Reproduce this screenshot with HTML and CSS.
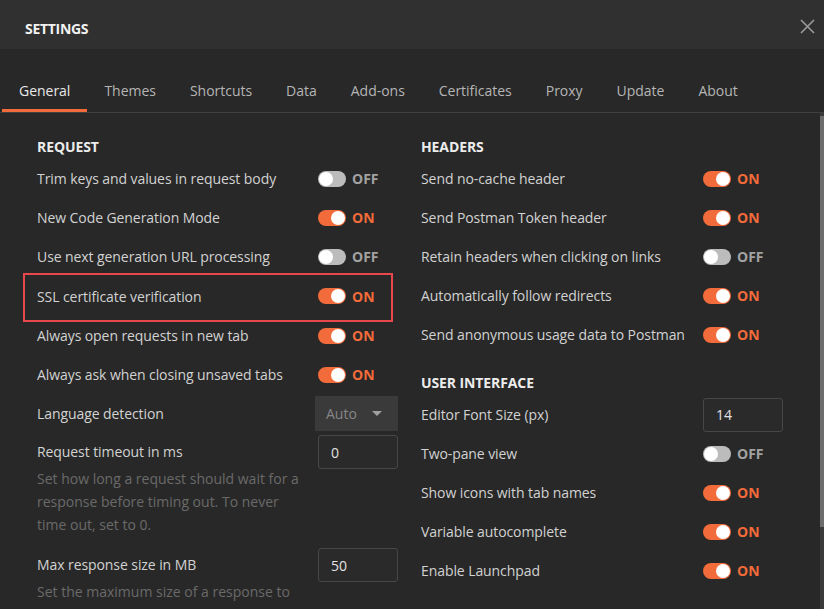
FILE: index.html
```html
<!DOCTYPE html>
<html>
<head>
<meta charset="utf-8">
<link rel="stylesheet" href="styles.css">
</head>
<body>
<div class="app">
  <header class="hdr">
    <span class="title">SETTINGS</span>
    <span class="close"><svg width="15" height="15" viewBox="0 0 15 15"><path d="M1 1L14 14M14 1L1 14" stroke="#9a9a9a" stroke-width="1.6" fill="none"/></svg></span>
  </header>
  <nav class="tabs">
    <span class="tab active">General</span>
    <span class="tab">Themes</span>
    <span class="tab">Shortcuts</span>
    <span class="tab">Data</span>
    <span class="tab">Add-ons</span>
    <span class="tab">Certificates</span>
    <span class="tab">Proxy</span>
    <span class="tab">Update</span>
    <span class="tab">About</span>
  </nav>
  <div class="main">
    <div class="cols">
      <section class="col">
        <h3 class="sec">REQUEST</h3>
        <div class="row"><span class="lbl">Trim keys and values in request body</span><span class="ctl"><span class="tg off"><span class="knob"></span></span><span class="st off">OFF</span></span></div>
        <div class="row"><span class="lbl">New Code Generation Mode</span><span class="ctl"><span class="tg on"><span class="knob"></span></span><span class="st on">ON</span></span></div>
        <div class="row"><span class="lbl">Use next generation URL processing</span><span class="ctl"><span class="tg off"><span class="knob"></span></span><span class="st off">OFF</span></span></div>
        <div class="row hl"><span class="lbl">SSL certificate verification</span><span class="ctl"><span class="tg on"><span class="knob"></span></span><span class="st on">ON</span></span></div>
        <div class="row"><span class="lbl">Always open requests in new tab</span><span class="ctl"><span class="tg on"><span class="knob"></span></span><span class="st on">ON</span></span></div>
        <div class="row"><span class="lbl">Always ask when closing unsaved tabs</span><span class="ctl"><span class="tg on"><span class="knob"></span></span><span class="st on">ON</span></span></div>
        <div class="row"><span class="lbl">Language detection</span><span class="ctl"><span class="sel"><span>Auto</span><span class="caret"></span></span></span></div>
        <div class="field">
          <div class="ftxt">
            <div class="flbl">Request timeout in ms</div>
            <div class="desc">Set how long a request should wait for a response before timing out. To never time out, set to 0.</div>
          </div>
          <span class="inp">0</span>
        </div>
        <div class="field">
          <div class="ftxt">
            <div class="flbl">Max response size in MB</div>
            <div class="desc">Set the maximum size of a response to download. To download a response of any size, set to 0.</div>
          </div>
          <span class="inp">50</span>
        </div>
      </section>
      <section class="col">
        <h3 class="sec">HEADERS</h3>
        <div class="row"><span class="lbl">Send no-cache header</span><span class="ctl"><span class="tg on"><span class="knob"></span></span><span class="st on">ON</span></span></div>
        <div class="row"><span class="lbl">Send Postman Token header</span><span class="ctl"><span class="tg on"><span class="knob"></span></span><span class="st on">ON</span></span></div>
        <div class="row"><span class="lbl">Retain headers when clicking on links</span><span class="ctl"><span class="tg off"><span class="knob"></span></span><span class="st off">OFF</span></span></div>
        <div class="row"><span class="lbl">Automatically follow redirects</span><span class="ctl"><span class="tg on"><span class="knob"></span></span><span class="st on">ON</span></span></div>
        <div class="row"><span class="lbl">Send anonymous usage data to Postman</span><span class="ctl"><span class="tg on"><span class="knob"></span></span><span class="st on">ON</span></span></div>
        <h3 class="sec sec2">USER INTERFACE</h3>
        <div class="row"><span class="lbl">Editor Font Size (px)</span><span class="ctl"><span class="inp">14</span></span></div>
        <div class="row"><span class="lbl">Two-pane view</span><span class="ctl"><span class="tg off"><span class="knob"></span></span><span class="st off">OFF</span></span></div>
        <div class="row"><span class="lbl">Show icons with tab names</span><span class="ctl"><span class="tg on"><span class="knob"></span></span><span class="st on">ON</span></span></div>
        <div class="row"><span class="lbl">Variable autocomplete</span><span class="ctl"><span class="tg on"><span class="knob"></span></span><span class="st on">ON</span></span></div>
        <div class="row"><span class="lbl">Enable Launchpad</span><span class="ctl"><span class="tg on"><span class="knob"></span></span><span class="st on">ON</span></span></div>
      </section>
    </div>
    <div class="scroll"><div class="thumb"></div></div>
  </div>
</div>
</body>
</html>
```
FILE: styles.css
```css
html, body {
  margin: 0;
  padding: 0;
}
body {
  background: #282828;
  font-family: "Open Sans", "Liberation Sans", sans-serif;
  overflow: hidden;
}
.app {
  width: 824px;
  height: 609px;
  display: flex;
  flex-direction: column;
  overflow: hidden;
}
.hdr {
  height: 49px;
  flex: none;
  background: #303030;
  display: flex;
  align-items: center;
  justify-content: space-between;
  padding: 0 9px 0 25px;
  box-sizing: border-box;
}
.title {
  color: #f2f2f2;
  font-size: 14px;
  font-weight: 700;
  letter-spacing: -0.3px;
  margin-top: 8px;
}
.close {
  display: flex;
  width: 15px;
  height: 15px;
  margin-top: 3px;
}
.tabs {
  flex: none;
  display: flex;
  padding: 23px 0 0 2px;
  border-bottom: 1px solid #414141;
}
.tab {
  height: 40px;
  box-sizing: border-box;
  padding: 0 17px;
  border-bottom: 3px solid transparent;
  display: flex;
  align-items: center;
  font-size: 14px;
  letter-spacing: -0.02px;
  color: #b5b5b5;
}
.tab.active {
  color: #e8e8e8;
  border-bottom-color: #f26b3a;
}
.main {
  flex: 1;
  display: flex;
  overflow: hidden;
}
.cols {
  flex: 1;
  display: grid;
  grid-template-columns: 361px 362px;
  column-gap: 23px;
  align-items: start;
  padding: 22px 0 0 37px;
}
.col {
  display: flex;
  flex-direction: column;
}
.sec {
  margin: 0;
  font-size: 14px;
  font-weight: 700;
  line-height: 24px;
  letter-spacing: -0.1px;
  color: #ececec;
}
.sec2 {
  margin-top: 17px;
}
.row {
  height: 39px;
  display: flex;
  align-items: center;
}
.hl {
  position: relative;
  height: 40px;
}
.hl::after {
  content: "";
  position: absolute;
  left: -14px;
  right: 5px;
  top: -3px;
  bottom: -6px;
  border: 2px solid #e8474c;
}
.lbl {
  flex: 1;
  font-size: 14px;
  letter-spacing: -0.08px;
  color: #d2d2d2;
  white-space: nowrap;
}
.ctl {
  width: 80px;
  display: flex;
  align-items: center;
  gap: 6px;
}
.tg {
  width: 28px;
  height: 16px;
  border-radius: 8px;
  box-sizing: border-box;
  padding: 1px;
  display: flex;
}
.tg.off {
  background: #bcbcbc;
  justify-content: flex-start;
}
.tg.on {
  background: #f26b3a;
  justify-content: flex-end;
}
.knob {
  width: 14px;
  height: 14px;
  border-radius: 50%;
  background: #ffffff;
}
.st {
  font-size: 14px;
  font-weight: 700;
}
.st.off {
  color: #a2a2a2;
}
.st.on {
  color: #f26b3a;
}
.sel {
  margin-left: -3px;
  width: 83px;
  height: 35px;
  box-sizing: border-box;
  background: #3a3a3a;
  display: flex;
  align-items: center;
  justify-content: space-between;
  padding: 0 16px 0 11px;
  font-size: 14px;
  color: #868686;
}
.caret {
  width: 0;
  height: 0;
  border-left: 5px solid transparent;
  border-right: 5px solid transparent;
  border-top: 5px solid #a0a0a0;
}
.field {
  display: flex;
  align-items: flex-start;
  padding-top: 2px;
}
.field + .field {
  padding-top: 12px;
}
.ftxt {
  width: 281px;
}
.flbl {
  font-size: 14px;
  line-height: 34px;
  letter-spacing: -0.08px;
  color: #d2d2d2;
}
.desc {
  margin-top: -2px;
  width: 265px;
  font-size: 14px;
  line-height: 23px;
  color: #6a6a6a;
}
.inp {
  width: 80px;
  height: 34px;
  box-sizing: border-box;
  border: 1px solid #474747;
  border-radius: 3px;
  background: #2a2a2a;
  display: flex;
  align-items: center;
  padding-left: 12px;
  font-size: 14px;
  color: #e2e2e2;
}
.scroll {
  width: 4px;
  flex: none;
  background: #3a3a3a;
  padding-top: 3px;
}
.thumb {
  height: 411px;
  background: #6c6c6c;
}
```
